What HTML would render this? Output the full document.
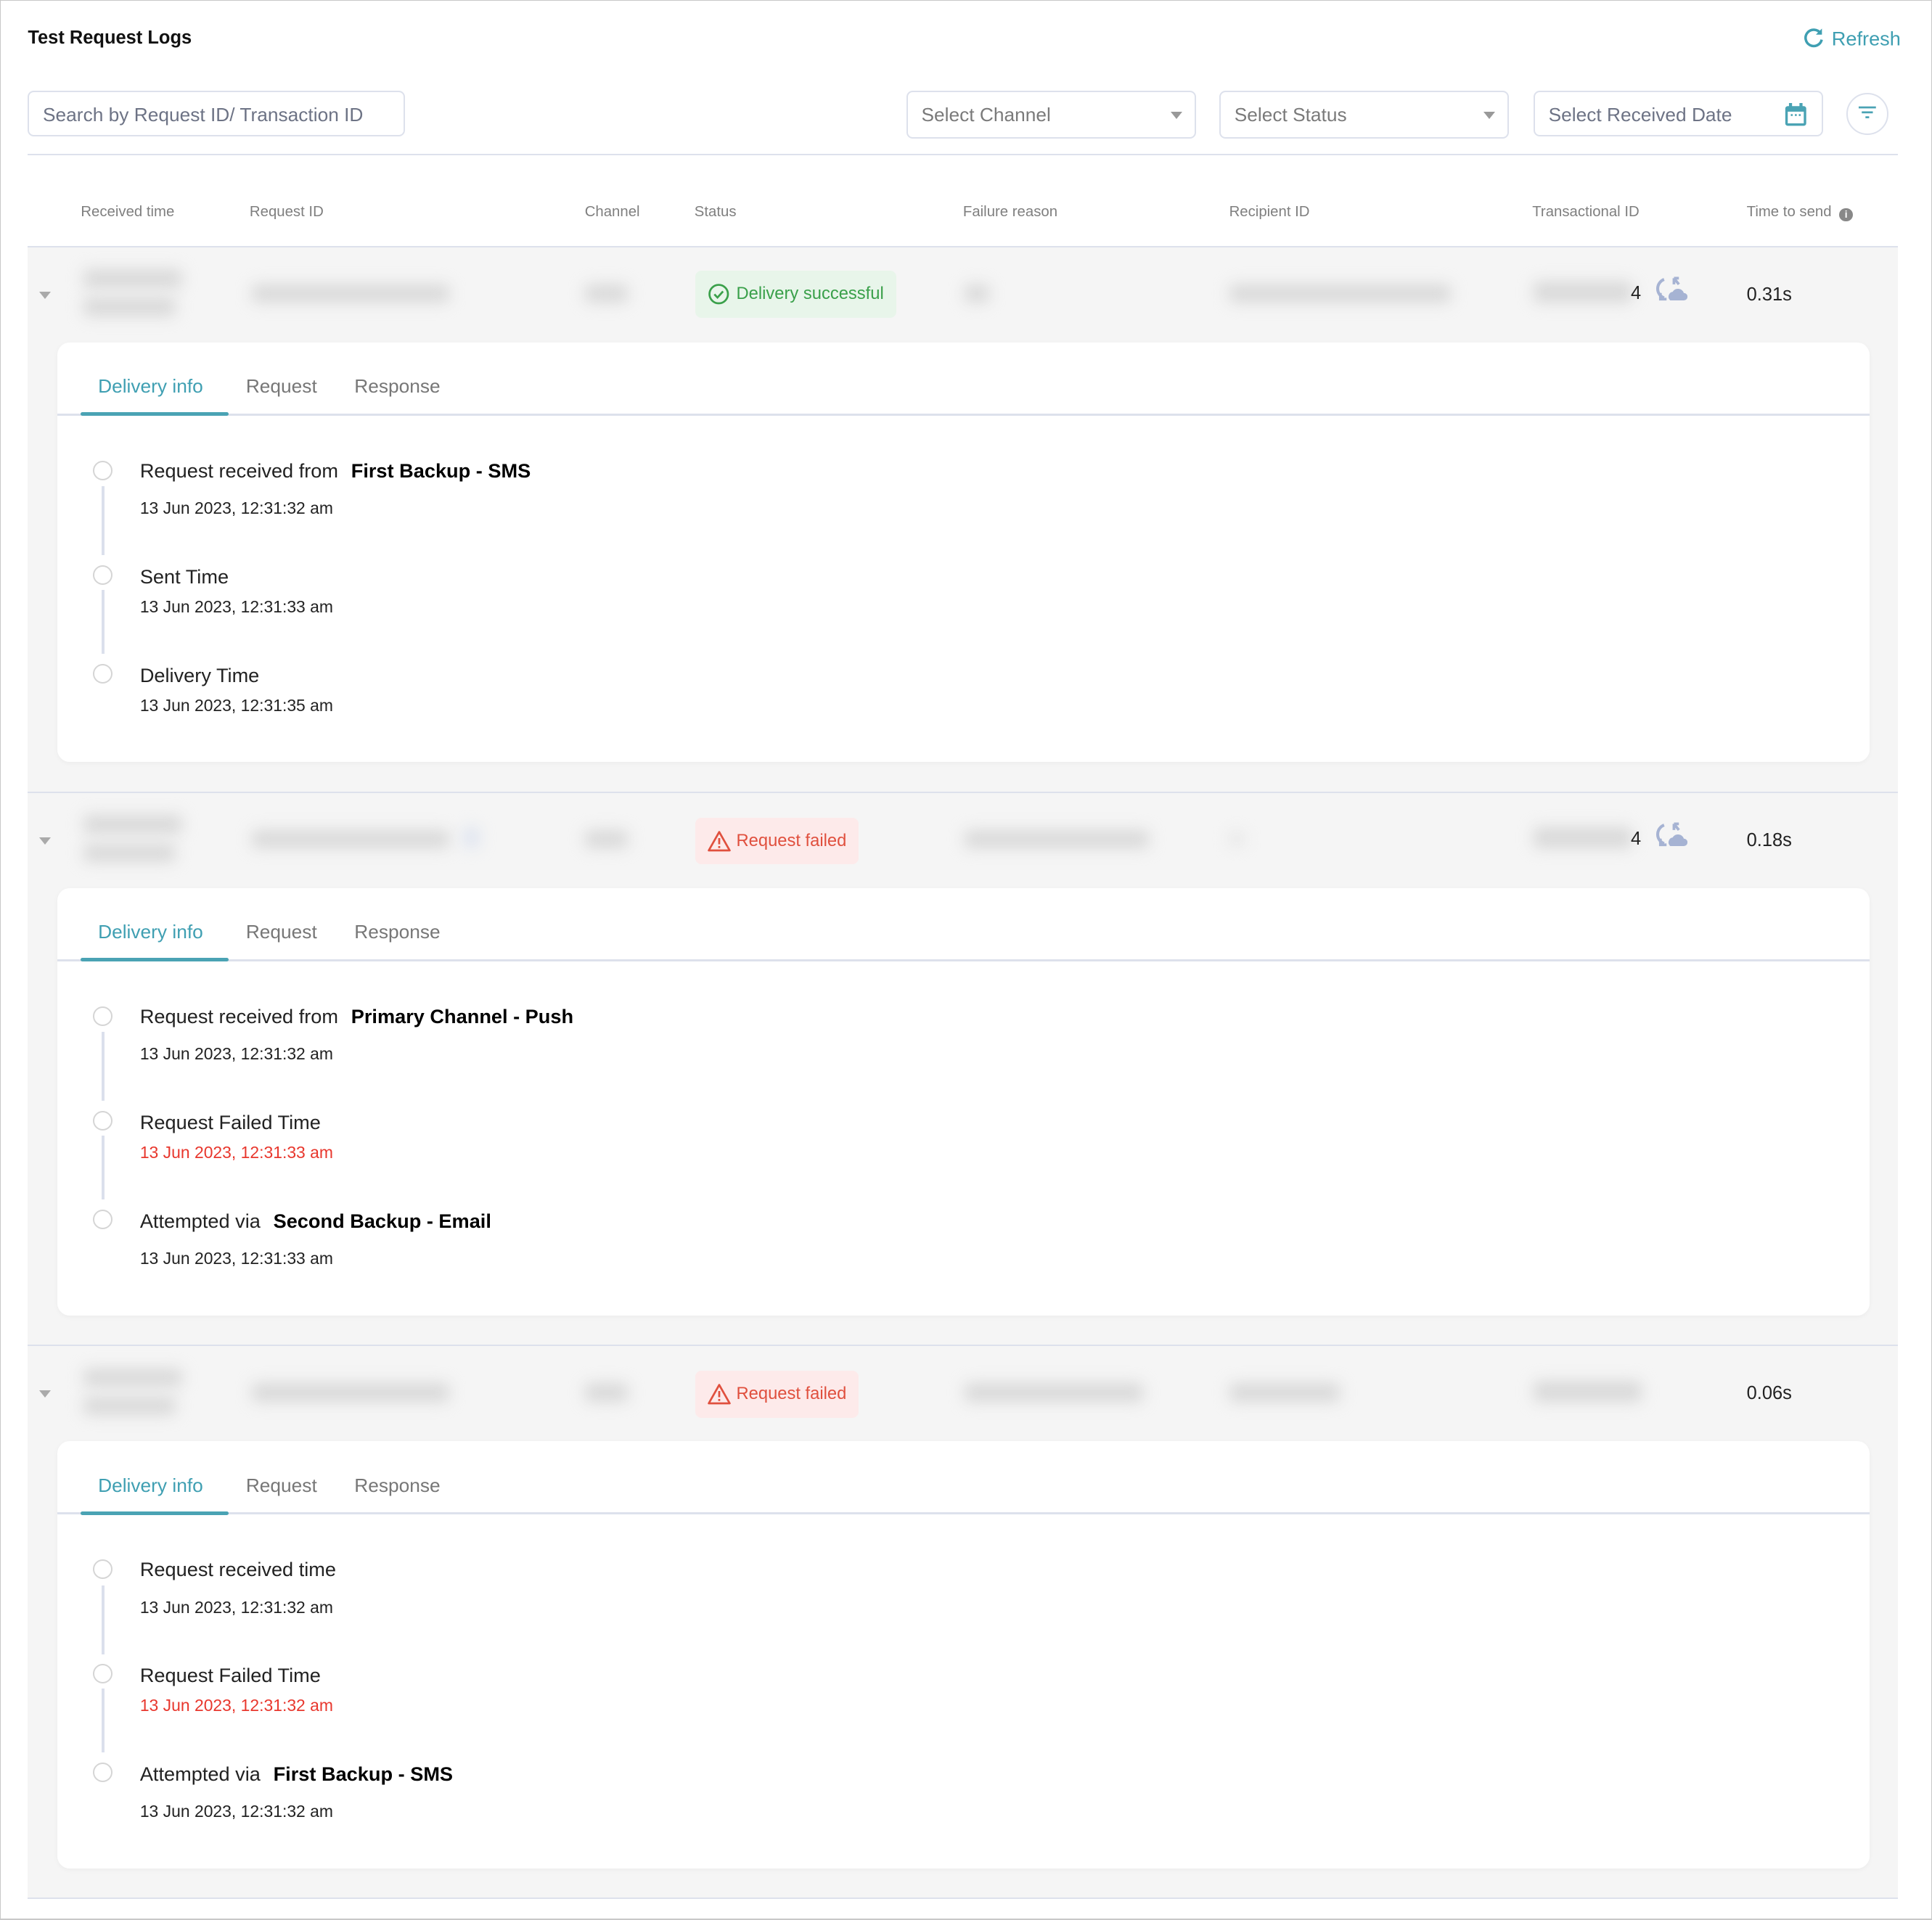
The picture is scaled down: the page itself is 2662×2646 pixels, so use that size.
<!DOCTYPE html>
<html><head><meta charset="utf-8"><style>
*{box-sizing:border-box;margin:0;padding:0}
html,body{width:2662px;height:2646px;overflow:hidden;background:#fff}
#w{zoom:1.69770;width:1568px;height:1559px;position:relative;font-family:"Liberation Sans",sans-serif;border:1px solid #c8c8c8;border-bottom:2px solid #c8c8c8}
.a{position:absolute;white-space:nowrap}
.box{position:absolute;border:1.5px solid #dde1ec;border-radius:5px;height:39px;top:73px;font-size:15.5px;color:#7a7a7a;padding:0 11px;line-height:37px}
.caret{position:absolute;right:10px;top:16px;width:0;height:0;border-left:5px solid transparent;border-right:5px solid transparent;border-top:6px solid #999}
.h{position:absolute;top:165px;font-size:12px;color:#7f7f7f}
.sec{position:absolute;left:22px;width:1518px;background:#f5f5f5;border-top:1.5px solid #dde1ec}
.bl{position:absolute;background:#d9d9d9;filter:blur(6px);border-radius:4px;padding:2px}
.card{position:absolute;left:24px;width:1471px;background:#fff;border-radius:10px;box-shadow:0 1px 4px rgba(0,0,0,.04)}
.tab{position:absolute;top:27px;font-size:15.5px;color:#777}
.tab.on{color:#3f9fb2}
.tl{position:absolute;left:0;right:0;top:58px;height:1.5px;background:#dde1ec}
.ul{position:absolute;left:19px;width:120px;top:57px;height:3px;background:#4aa3b4;border-radius:2px}
.c{position:absolute;left:29px;width:16px;height:16px;border:1.5px solid #d5d5d5;border-radius:50%}
.v{position:absolute;left:36px;width:2px;background:#dbe0ec}
.t{position:absolute;left:67px;font-size:16px;color:#222}
.t b{color:#000;margin-left:6px}
.d{position:absolute;left:67px;font-size:13.5px;color:#222}
.d.r{color:#e8372d}
.badge{position:absolute;left:542px;height:38px;border-radius:5px;font-size:14px;line-height:38px;padding-left:33px}
.g{background:#e8f5ea;color:#3aa04a;width:163px}
.f{background:#fdeaea;color:#e0503e;width:132px}
.arr{position:absolute;left:9px;width:0;height:0;border-left:5px solid transparent;border-right:5px solid transparent;border-top:6px solid #aaa}
.ts{position:absolute;left:1395px;font-size:15px;color:#222}
</style></head><body><div id="w">
<div class="a" style="left:22px;top:22px;font-size:15px;font-weight:bold;color:#111">Test Request Logs</div>
<div class="a" style="left:1463px;top:21px;font-size:16px;color:#3f9fb2"><svg width="17" height="17" viewBox="0 0 18 18" style="vertical-align:-2px;margin-right:6px"><path d="M14.5 5.5A7 7 0 1 0 15.6 11" fill="none" stroke="#3f9fb2" stroke-width="2.2"/><path d="M15.8 1.5v5.2h-5.2z" fill="#3f9fb2"/></svg>Refresh</div>
<div class="box" style="left:22px;width:306px;height:37px;color:#6d7385">Search by Request ID/ Transaction ID</div>
<div class="box" style="left:735px;width:235px">Select Channel<span class="caret"></span></div>
<div class="box" style="left:989px;width:235px">Select Status<span class="caret"></span></div>
<div class="box" style="left:1244px;width:235px;height:37px;color:#6d7385">Select Received Date
<svg width="18" height="19" viewBox="0 0 18 19" style="position:absolute;right:12px;top:9px"><rect x="0.5" y="2.5" width="17" height="16" rx="2" fill="#4aa3b4"/><rect x="2.5" y="7" width="13" height="9.5" fill="#fff"/><rect x="3.5" y="0" width="2.5" height="4" fill="#4aa3b4"/><rect x="12" y="0" width="2.5" height="4" fill="#4aa3b4"/><rect x="5" y="9" width="1.5" height="1.5" fill="#4aa3b4"/><rect x="8.3" y="9" width="1.5" height="1.5" fill="#4aa3b4"/><rect x="11.5" y="9" width="1.5" height="1.5" fill="#4aa3b4"/></svg></div>
<div class="a" style="left:1498px;top:75px;width:34px;height:34px;border:1.5px solid #dde1ec;border-radius:50%"><svg width="34" height="34" viewBox="0 0 34 34" style="position:absolute;left:-1.5px;top:-1.5px"><rect x="10" y="11" width="14" height="1.6" fill="#4aa3b4"/><rect x="12.5" y="15" width="9" height="1.6" fill="#4aa3b4"/><rect x="15.5" y="19" width="3" height="1.6" fill="#4aa3b4"/></svg></div>
<div class="a" style="left:22px;top:124px;width:1518px;height:1.5px;background:#dde1ec"></div>
<div class="h" style="left:65px">Received time</div><div class="h" style="left:202px">Request ID</div><div class="h" style="left:474px">Channel</div><div class="h" style="left:563px">Status</div><div class="h" style="left:781px">Failure reason</div><div class="h" style="left:997px">Recipient ID</div><div class="h" style="left:1243px">Transactional ID</div><div class="h" style="left:1417px">Time to send <span style="display:inline-block;width:11px;height:11px;border-radius:50%;background:#888;color:#fff;font-size:8px;text-align:center;line-height:11px;vertical-align:-1px;margin-left:3px;font-weight:bold">i</span></div>

<!-- row 1 -->
<div class="sec" style="top:199px;height:443px">
<div class="arr" style="top:36px"></div>
<div class="bl" style="left:45px;top:18px;width:80px;height:15px"></div><div class="bl" style="left:45px;top:41px;width:75px;height:15px"></div>
<div class="bl" style="left:182px;top:30px;width:160px;height:15px"></div>
<div class="bl" style="left:452px;top:30px;width:35px;height:15px"></div>
<div class="badge g" style="top:19px"><svg width="18" height="18" viewBox="0 0 18 18" style="position:absolute;left:10px;top:10px"><circle cx="9" cy="9" r="7.5" fill="none" stroke="#3aa04a" stroke-width="1.6"/><path d="M5.5 9.2l2.5 2.6 4.5-5" fill="none" stroke="#3aa04a" stroke-width="1.6"/></svg>Delivery successful</div>
<div class="bl" style="left:760px;top:30px;width:20px;height:15px"></div>
<div class="bl" style="left:975px;top:30px;width:180px;height:15px"></div>
<div class="bl" style="left:1222px;top:28px;width:80px;height:17px"></div>
<div class="a" style="left:1301px;top:29px;font-size:15px;color:#222">4</div>
<svg class="a" style="left:1321px;top:23px" width="26" height="24" viewBox="0 0 26 24"><path d="M7 3a8 8 0 0 0 0 15" fill="none" stroke="#a6b3d3" stroke-width="2.4"/><path d="M4 14v5h5" fill="none" stroke="#a6b3d3" stroke-width="2.2"/><path d="M15 2v5M15 2h4M15 2l4 5" fill="none" stroke="#a6b3d3" stroke-width="2.2"/><path d="M12 20a4 4 0 0 1 2-7 5 5 0 0 1 9 1 3 3 0 0 1 0 6z" fill="#a6b3d3"/></svg>
<div class="ts" style="top:30px">0.31s</div>
<div class="card" style="top:77px;height:341px">
<div class="tab on" style="left:33px">Delivery info</div><div class="tab" style="left:153px">Request</div><div class="tab" style="left:241px">Response</div>
<div class="tl"></div><div class="ul"></div>
<div class="c" style="top:96px"></div><div class="t" style="top:95px">Request received from <b>First Backup - SMS</b></div><div class="d" style="top:127px">13 Jun 2023, 12:31:32 am</div>
<div class="v" style="top:117px;height:56px"></div>
<div class="c" style="top:181px"></div><div class="t" style="top:181px">Sent Time</div><div class="d" style="top:207px">13 Jun 2023, 12:31:33 am</div>
<div class="v" style="top:201px;height:52px"></div>
<div class="c" style="top:261px"></div><div class="t" style="top:261px">Delivery Time</div><div class="d" style="top:287px">13 Jun 2023, 12:31:35 am</div>
</div></div>

<!-- row 2 -->
<div class="sec" style="top:642px;height:449px">
<div class="arr" style="top:36px"></div>
<div class="bl" style="left:45px;top:18px;width:80px;height:15px"></div><div class="bl" style="left:45px;top:41px;width:75px;height:15px"></div>
<div class="bl" style="left:182px;top:30px;width:160px;height:15px"></div>
<div class="bl" style="left:354px;top:28px;width:12px;height:16px;background:#dde3ef"></div>
<div class="bl" style="left:452px;top:30px;width:35px;height:15px"></div>
<div class="badge f" style="top:20px"><svg width="20" height="18" viewBox="0 0 20 18" style="position:absolute;left:9px;top:10px"><path d="M10 1.5L18.5 16.5H1.5z" fill="none" stroke="#e0503e" stroke-width="1.6" stroke-linejoin="round"/><path d="M10 6.5v5M10 13v1.6" stroke="#e0503e" stroke-width="1.6"/></svg>Request failed</div>
<div class="bl" style="left:760px;top:30px;width:150px;height:15px"></div>
<div class="bl" style="left:975px;top:31px;width:12px;height:12px;background:#e6e6e6"></div>
<div class="bl" style="left:1222px;top:28px;width:80px;height:17px"></div>
<div class="a" style="left:1301px;top:29px;font-size:15px;color:#222">4</div>
<svg class="a" style="left:1321px;top:23px" width="26" height="24" viewBox="0 0 26 24"><path d="M7 3a8 8 0 0 0 0 15" fill="none" stroke="#a6b3d3" stroke-width="2.4"/><path d="M4 14v5h5" fill="none" stroke="#a6b3d3" stroke-width="2.2"/><path d="M15 2v5M15 2h4M15 2l4 5" fill="none" stroke="#a6b3d3" stroke-width="2.2"/><path d="M12 20a4 4 0 0 1 2-7 5 5 0 0 1 9 1 3 3 0 0 1 0 6z" fill="#a6b3d3"/></svg>
<div class="ts" style="top:30px">0.18s</div>
<div class="card" style="top:77px;height:347px">
<div class="tab on" style="left:33px">Delivery info</div><div class="tab" style="left:153px">Request</div><div class="tab" style="left:241px">Response</div>
<div class="tl"></div><div class="ul"></div>
<div class="c" style="top:96px"></div><div class="t" style="top:95px">Request received from <b>Primary Channel - Push</b></div><div class="d" style="top:127px">13 Jun 2023, 12:31:32 am</div>
<div class="v" style="top:117px;height:56px"></div>
<div class="c" style="top:181px"></div><div class="t" style="top:181px">Request Failed Time</div><div class="d r" style="top:207px">13 Jun 2023, 12:31:33 am</div>
<div class="v" style="top:201px;height:52px"></div>
<div class="c" style="top:261px"></div><div class="t" style="top:261px">Attempted via <b>Second Backup - Email</b></div><div class="d" style="top:293px">13 Jun 2023, 12:31:33 am</div>
</div></div>

<!-- row 3 -->
<div class="sec" style="top:1091px;height:450px;border-bottom:1.5px solid #dde1ec">
<div class="arr" style="top:36px"></div>
<div class="bl" style="left:45px;top:18px;width:80px;height:15px"></div><div class="bl" style="left:45px;top:41px;width:75px;height:15px"></div>
<div class="bl" style="left:182px;top:30px;width:160px;height:15px"></div>
<div class="bl" style="left:452px;top:30px;width:35px;height:15px"></div>
<div class="badge f" style="top:20px"><svg width="20" height="18" viewBox="0 0 20 18" style="position:absolute;left:9px;top:10px"><path d="M10 1.5L18.5 16.5H1.5z" fill="none" stroke="#e0503e" stroke-width="1.6" stroke-linejoin="round"/><path d="M10 6.5v5M10 13v1.6" stroke="#e0503e" stroke-width="1.6"/></svg>Request failed</div>
<div class="bl" style="left:760px;top:30px;width:145px;height:15px"></div>
<div class="bl" style="left:975px;top:30px;width:90px;height:15px"></div>
<div class="bl" style="left:1222px;top:28px;width:88px;height:17px"></div>
<div class="ts" style="top:30px">0.06s</div>
<div class="card" style="top:77px;height:347px">
<div class="tab on" style="left:33px">Delivery info</div><div class="tab" style="left:153px">Request</div><div class="tab" style="left:241px">Response</div>
<div class="tl"></div><div class="ul"></div>
<div class="c" style="top:96px"></div><div class="t" style="top:95px">Request received time</div><div class="d" style="top:127px">13 Jun 2023, 12:31:32 am</div>
<div class="v" style="top:117px;height:56px"></div>
<div class="c" style="top:181px"></div><div class="t" style="top:181px">Request Failed Time</div><div class="d r" style="top:207px">13 Jun 2023, 12:31:32 am</div>
<div class="v" style="top:201px;height:52px"></div>
<div class="c" style="top:261px"></div><div class="t" style="top:261px">Attempted via <b>First Backup - SMS</b></div><div class="d" style="top:293px">13 Jun 2023, 12:31:32 am</div>
</div></div>
</div></body></html>
